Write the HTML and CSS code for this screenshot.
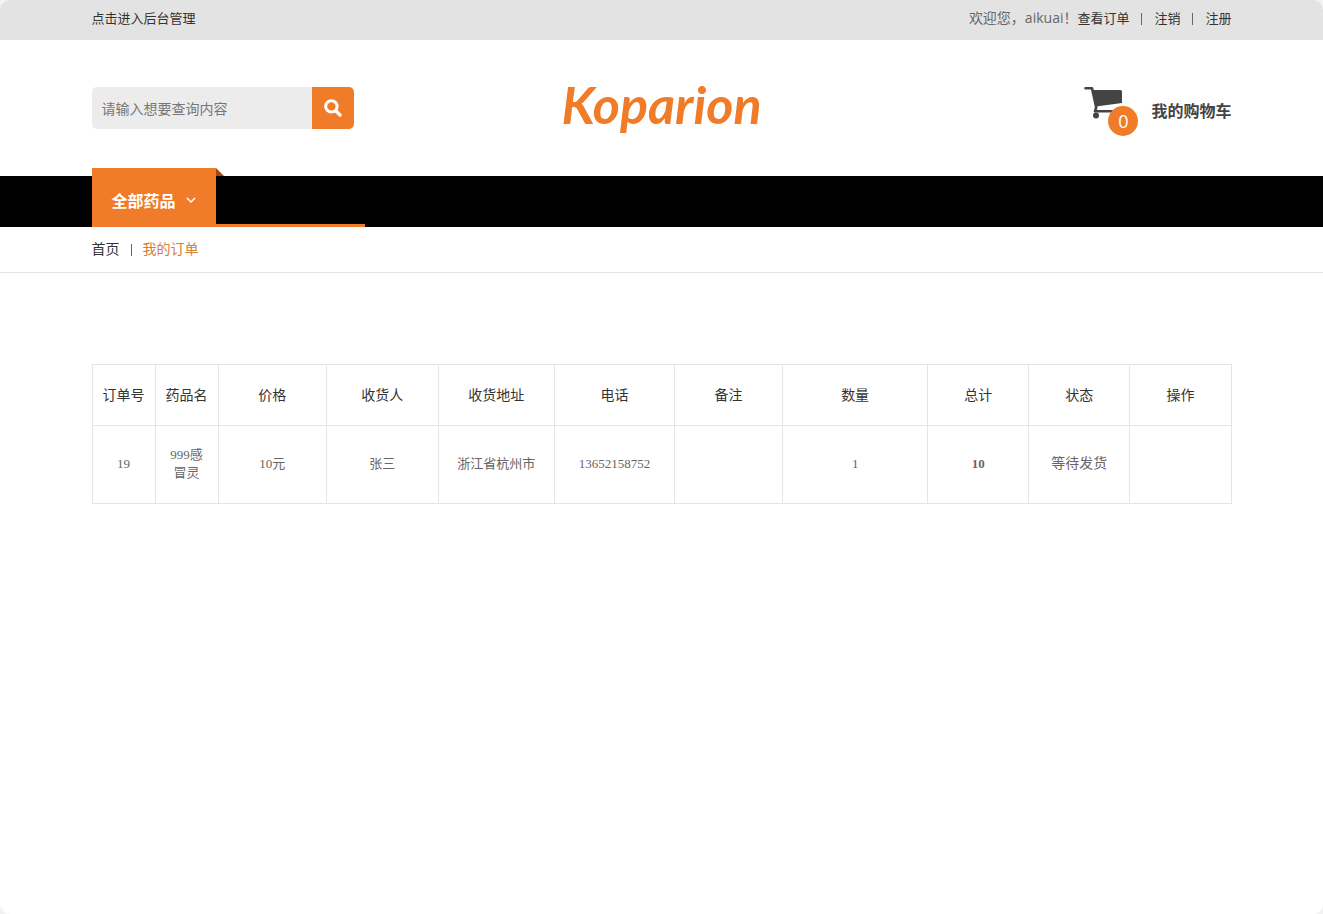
FILE: index.html
```html
<!DOCTYPE html>
<html lang="zh-CN">
<head>
<meta charset="utf-8">
<meta name="viewport" content="width=device-width, initial-scale=1">
<title>我的订单</title>
<link rel="stylesheet" href="styles.css">
</head>
<body>
<div class="page">
  <div class="topbar">
    <div class="container topbar-row">
      <a class="admin-link" href="#">点击进入后台管理</a>
      <div class="account">
        <span class="welcome">欢迎您，aikuai！</span>
        <ul class="account-links">
          <li><a href="#">查看订单</a></li>
          <li><a href="#">注销</a></li>
          <li><a href="#">注册</a></li>
        </ul>
      </div>
    </div>
  </div>
  <header class="header">
    <div class="container header-row">
      <form class="search">
        <input class="search-input" type="text" placeholder="请输入想要查询内容" aria-label="请输入想要查询内容">
        <button class="search-button" type="button" aria-label="搜索">
          <svg width="18" height="18" viewBox="0 0 18 18" fill="none" stroke="#fff" aria-hidden="true">
            <circle cx="7.4" cy="7.4" r="5.7" stroke-width="3"/>
            <path d="M12 12l4 4" stroke-width="3.4" stroke-linecap="round"/>
          </svg>
        </button>
      </form>
      <a class="logo" href="#">Koparion</a>
      <a class="cart" href="#">
        <span class="cart-icon">
          <svg width="38" height="34" viewBox="0 0 38 34" aria-hidden="true">
            <path d="M1.500 2.300h6.500l4.200 19-1.200 4h18" fill="none" stroke="#444" stroke-width="2.600" stroke-linecap="round" stroke-linejoin="round"/>
            <path d="M8.500 4h28q1.500 0 1.500 1.500V17L12 20.500z" fill="#444"/>
            <circle cx="12" cy="29.500" r="3" fill="#444"/>
            <circle cx="30" cy="29.500" r="3" fill="#444"/>
          </svg>
          <span class="cart-count">0</span>
        </span>
        <span class="cart-label">我的购物车</span>
      </a>
    </div>
  </header>
  <nav class="nav">
    <div class="container">
      <div class="category">
        <button class="category-button" type="button">全部药品
          <svg width="10" height="7" viewBox="0 0 10 7" fill="none" stroke="#fff" stroke-width="1.500" aria-hidden="true"><path d="M1 1l4 4 4-4"/></svg>
        </button>
      </div>
    </div>
  </nav>
  <div class="breadcrumb">
    <ol class="container crumbs">
      <li><a href="#">首页</a></li>
      <li><a class="current" href="#">我的订单</a></li>
    </ol>
  </div>
  <main class="container orders">
    <table class="order-table">
      <colgroup>
        <col class="col-id"><col class="col-id"><col class="col-medium"><col class="col-person"><col class="col-address"><col class="col-phone"><col class="col-medium"><col class="col-count"><col class="col-end"><col class="col-end"><col class="col-end">
      </colgroup>
      <thead>
        <tr><th>订单号</th><th>药品名</th><th>价格</th><th>收货人</th><th>收货地址</th><th>电话</th><th>备注</th><th>数量</th><th>总计</th><th>状态</th><th>操作</th></tr>
      </thead>
      <tbody>
        <tr><td>19</td><td>999感冒灵</td><td>10元</td><td>张三</td><td>浙江省杭州市</td><td>13652158752</td><td></td><td>1</td><td class="total">10</td><td class="status">等待发货</td><td></td></tr>
      </tbody>
    </table>
  </main>
</div>
</body>
</html>
```
FILE: styles.css
```css
* { box-sizing: border-box; }
html { background: #f2f2f2; }
body {
  margin: 0;
  color: #666;
  font-family: "Open Sans", "Noto Sans CJK SC", sans-serif;
  font-size: 14px;
  line-height: 20px;
}
a { color: #333; text-decoration: none; }
ul, ol { margin: 0; padding: 0; list-style: none; }
button, input { font: inherit; border: 0; }
.page { min-height: 100vh; background: #fff; border-radius: 10px; overflow: hidden; }
.container { width: 100%; max-width: 1140px; margin: 0 auto; }

.topbar { background: #e3e3e3; padding: 8px 0 12px; }
.topbar-row, .account, .account-links, .search, .cart, .crumbs { display: flex; align-items: center; }
.topbar-row { justify-content: space-between; }
.admin-link, .account-links { font-size: 13px; }
.account-links li + li::before,
.crumbs li + li::before {
  content: "";
  display: inline-block;
  width: 1px;
  height: 12px;
  margin: 0 12px;
  background: #666;
  vertical-align: -2px;
}
.crumbs li + li::before { margin: 0 11px; }

.header-row { display: grid; grid-template-columns: 1fr auto 1fr; align-items: center; height: 136px; }
.search-input {
  width: 220px;
  height: 42px;
  padding: 0 10px;
  background: #ececec;
  border-radius: 5px 0 0 5px;
}
.search-input::placeholder { color: #777; opacity: 1; }
.search-button {
  display: grid;
  place-items: center;
  width: 42px;
  height: 42px;
  padding: 0;
  background: #f07c29;
  border-radius: 0 5px 5px 0;
}
.logo {
  padding-bottom: 8px;
  color: #f07c29;
  font-family: Lato, sans-serif;
  font-size: 52px;
  font-style: italic;
  font-weight: 700;
  line-height: 60px;
}
.cart { justify-self: end; gap: 13px; padding-top: 5px; }
.cart-icon { position: relative; width: 54px; height: 50px; }
.cart-icon svg { display: block; }
.cart-count {
  position: absolute;
  right: 0;
  bottom: 0;
  width: 30px;
  height: 30px;
  border-radius: 50%;
  background: #f07c29;
  color: #fff;
  font-size: 18px;
  line-height: 30px;
  text-align: center;
}
.cart-label { color: #444; font-size: 16px; font-weight: 600; }

.nav { background: #000; }
.category {
  display: flex;
  align-items: flex-start;
  width: 273px;
  height: 51px;
  border-bottom: 3px solid #f07c29;
}
.category-button {
  position: relative;
  display: flex;
  align-items: center;
  gap: 10px;
  height: 59px;
  margin-top: -8px;
  padding: 6px 20px 0;
  background: #f07c29;
  color: #fff;
  font-size: 16px;
  font-weight: 700;
}
.category-button::after {
  content: "";
  position: absolute;
  left: 100%;
  top: 0;
  border-top: 8px solid transparent;
  border-left: 8px solid #a34a0b;
}

.breadcrumb { padding: 12px 0 13px; border-bottom: 1px solid #e5e5e5; }
.crumbs .current { color: #d58033; }

.orders { padding-top: 91px; }
.order-table { width: 100%; table-layout: fixed; border-collapse: collapse; text-align: center; }
.order-table th, .order-table td { border: 1px solid #e5e5e5; }
.order-table th { height: 61px; padding: 0; color: #333; font-weight: 400; }
.order-table td {
  height: 78px;
  padding: 0 10px 2px;
  font-family: "Liberation Serif", "Noto Sans CJK SC", serif;
  font-size: 13px;
  line-height: 18px;
}
.order-table .total { font-weight: 700; }
.order-table .status { font-size: 14px; }
.col-id { width: 63px; }
.col-medium { width: 108px; }
.col-person { width: 112px; }
.col-address { width: 116px; }
.col-phone { width: 120px; }
.col-count { width: 145px; }
.col-end { width: 101px; }
```
